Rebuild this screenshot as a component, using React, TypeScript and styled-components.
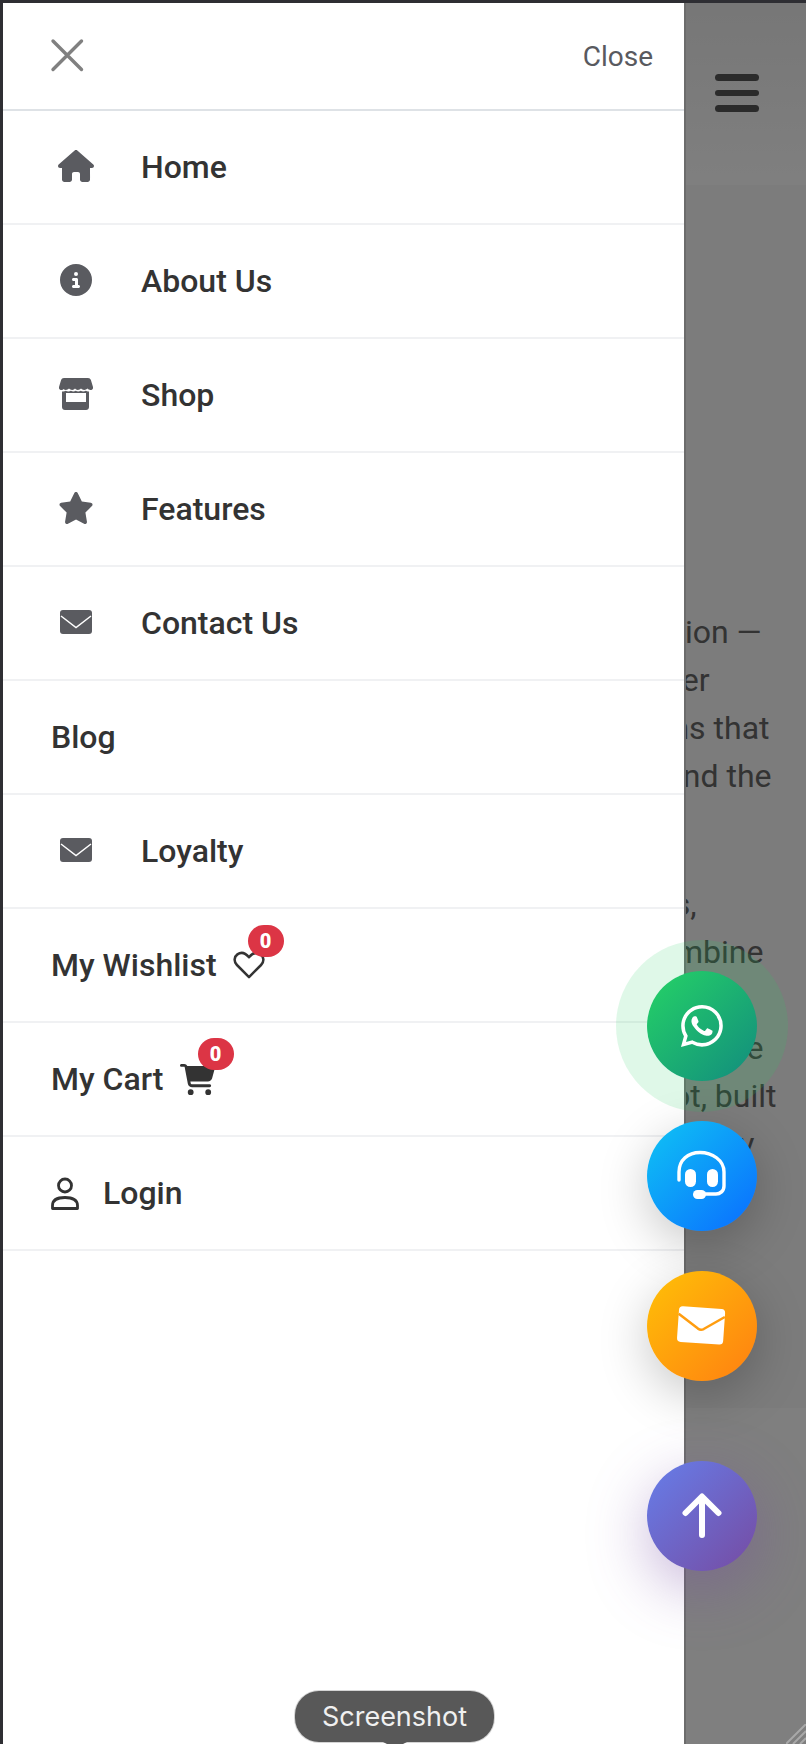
import styled, { createGlobalStyle } from 'styled-components';
import { FaHouse, FaCircleInfo, FaStar, FaCartShopping } from 'react-icons/fa6';
import { BsWhatsapp } from 'react-icons/bs';

const GlobalStyle = createGlobalStyle`
  html, body {
    margin: 0;
    padding: 0;
    background: #fff;
  }
  body {
    font-family: Roboto, "Liberation Sans", sans-serif;
  }
`;

const Screen = styled.div`
  position: relative;
  width: 806px;
  height: 1744px;
  box-sizing: border-box;
  overflow: hidden;
  border-top: 3px solid #2e2e33;
  border-left: 3px solid #2e2e33;
`;

const Page = styled.div`
  display: flex;
  flex-direction: column;
  height: 100%;
  background: #fff;
`;

const PageHeader = styled.header`
  display: flex;
  justify-content: flex-end;
  box-sizing: border-box;
  height: 182px;
  padding: 71px 47px 0 0;
  background: linear-gradient(#eee, #fff);
  box-shadow: 0 3px 12px rgba(0, 0, 0, 0.06);
`;

const Burger = styled.div`
  display: flex;
  flex-direction: column;
  gap: 9px;
  width: 44px;
`;

const BurgerBar = styled.span`
  height: 6.5px;
  border-radius: 4px;
  background: #565656;
`;

const Article = styled.main`
  box-sizing: border-box;
  height: 1223px;
  padding-top: 423px;
  background: #f8f8f8;
  color: #666;
  font-size: 32px;
  line-height: 48px;
`;

const Paragraph = styled.div`
  margin-bottom: 80px;
`;

const TextLine = styled.div<{ $end: number }>`
  white-space: nowrap;
  text-align: right;
  padding-right: ${({ $end }) => 804.5 - $end}px;
`;

const Overlay = styled.div`
  position: absolute;
  inset: 0;
  background: rgba(0, 0, 0, 0.5);
`;

const Drawer = styled.aside`
  position: absolute;
  top: 0;
  left: 0;
  bottom: 0;
  width: 683px;
  box-sizing: border-box;
  background: #fff;
  border-right: 2px solid #6c6c6c;
`;

const DrawerHeader = styled.div`
  display: flex;
  align-items: center;
  justify-content: space-between;
  box-sizing: border-box;
  height: 108px;
  padding: 0 31px 0 47px;
  border-bottom: 2px solid #dee2e6;
`;

const CloseLabel = styled.span`
  font-size: 28px;
  color: #595a5f;
`;

const MenuList = styled.nav`
  display: flex;
  flex-direction: column;
`;

const MenuRow = styled.div`
  display: flex;
  align-items: center;
  box-sizing: border-box;
  height: 114px;
  padding: 0 0 0 48px;
  border-bottom: 2px solid #f0f1f3;
  color: #333;
  font-size: 32px;
  font-weight: 500;
`;

const IconSlot = styled.span`
  display: flex;
  align-items: center;
  justify-content: center;
  width: 50px;
  margin-right: 40px;
  margin-bottom: 2px;
  color: #5a5b60;
`;

const LoginIcon = styled.span`
  display: flex;
  margin-right: 24px;
  color: #333;
`;

const BadgeHolder = styled.span`
  position: relative;
  display: flex;
  margin-left: 16px;
  color: #333;
`;

const Badge = styled.span<{ $left: number; $top: number }>`
  position: absolute;
  left: ${({ $left }) => $left}px;
  top: ${({ $top }) => $top}px;
  display: flex;
  align-items: center;
  justify-content: center;
  width: 36px;
  height: 32px;
  border-radius: 16px;
  background: #dc3545;
  color: #fff;
  font-size: 20px;
  font-weight: 900;
`;

const FloatColumn = styled.div`
  position: absolute;
  top: 968px;
  right: 49px;
  display: flex;
  flex-direction: column;
  gap: 40px;
`;

const FloatButton = styled.div<{ $background: string; $shadow: string; $offset?: number }>`
  display: flex;
  align-items: center;
  justify-content: center;
  width: 110px;
  height: 110px;
  margin-top: ${({ $offset }) => $offset || 0}px;
  border-radius: 50%;
  color: #fff;
  background: ${({ $background }) => $background};
  box-shadow: ${({ $shadow }) => $shadow};
`;

const ScreenshotPill = styled.div`
  position: absolute;
  left: 292px;
  top: 1688px;
  display: flex;
  align-items: center;
  justify-content: center;
  width: 199px;
  height: 51px;
  border-radius: 24px;
  background: #585858;
  box-shadow: 0 0 0 1px rgba(160, 160, 160, 0.45);
  color: #f0f0f0;
  font-family: Inter, "Liberation Sans", sans-serif;
  font-size: 27px;

  &::after {
    content: '';
    position: absolute;
    left: 86px;
    bottom: -6px;
    border-left: 14px solid transparent;
    border-right: 14px solid transparent;
    border-top: 7px solid #585858;
  }
`;

const ResizeGrip = styled.svg`
  position: absolute;
  right: 0;
  bottom: 0;
`;

const MailGlyph = () => (
  <svg width="32" height="24" viewBox="0 0 32 24">
    <rect width="32" height="24" rx="3" fill="currentColor" />
    <path d="M1 6 L16 17.5 L31 6" fill="none" stroke="#fff" strokeWidth="1.5" />
  </svg>
);

const ShopGlyph = () => (
  <svg width="34" height="32" viewBox="0 0 34 32">
    <path
      fill="currentColor"
      d="M5 0h24c1.500 0 2.400.8 2.900 2L34 9c.3 1.600-.6 3-2.500 3-1.300 0-2.400-.5-3.100-1.400-.8.9-1.900 1.400-3.200 1.400s-2.400-.5-3.200-1.400c-.8.9-1.900 1.400-3.200 1.400-1.200 0-2.200-.5-2.800-1.400-.6.9-1.600 1.400-2.800 1.400-1.300 0-2.400-.5-3.200-1.400-.8.9-1.900 1.400-3.200 1.400s-2.400-.5-3.100-1.400C4.900 11.500 3.800 12 2.500 12 .6 12-.3 10.600 0 9l2.100-7C2.600.8 3.500 0 5 0z"
    />
    <path
      fill="currentColor"
      fillRule="evenodd"
      d="M3 13.500c1.300.3 2.700 0 3.800-.7 1.500 1 3.600 1 5.100 0 1.500 1 3.300 1 4.800 0 1.500 1 3.500 1 5 0 1.500 1 3.600 1 5.100 0 1.100.7 2.100 1 3.200.7V29c0 1.700-1.300 3-3 3H6c-1.700 0-3-1.300-3-3V13.500zM7 15v9h20v-9H7z"
    />
  </svg>
);

const CloseGlyph = () => (
  <svg width="36" height="36" viewBox="0 0 36 36">
    <path d="M3 3 L31.500 31.500 M31.500 3 L3 31.500" stroke="#808080" strokeWidth="3.400" strokeLinecap="round" />
  </svg>
);

const HeartGlyph = () => (
  <svg width="32" height="28" viewBox="0 0 33 29">
    <path
      d="M16.500 27 L4 14.500 C0.500 11 1 6 4.500 3.500 C8 1 12.500 1.700 16.500 6.500 C20.500 1.700 25 1 28.500 3.500 C32 6 32.500 11 29 14.500 Z"
      fill="none"
      stroke="currentColor"
      strokeWidth="2.600"
      strokeLinejoin="round"
    />
  </svg>
);

const UserGlyph = () => (
  <svg width="28" height="33" viewBox="0 0 28 33">
    <circle cx="14" cy="8.500" r="6.500" fill="none" stroke="currentColor" strokeWidth="2.800" />
    <path
      d="M1.500 31.500 V28.500 C1.500 23 6 20.500 14 20.500 C22 20.500 26.500 23 26.500 28.500 V31.500 Z"
      fill="none"
      stroke="currentColor"
      strokeWidth="2.800"
      strokeLinejoin="round"
    />
  </svg>
);

const HeadsetGlyph = () => (
  <svg width="54" height="54" viewBox="0 0 54 54">
    <path
      d="M4 31 V23 C4 11 13 3.500 25 3.500 C37 3.500 49 11 49 23 V37 C49 42 45 45 41 45 H30"
      fill="none"
      stroke="#fff"
      strokeWidth="3.400"
      strokeLinecap="round"
    />
    <rect x="10" y="20" width="11" height="18" rx="5.500" fill="#fff" />
    <rect x="32" y="20" width="11" height="18" rx="5.500" fill="#fff" />
    <rect x="18" y="41" width="13" height="9" rx="4.500" fill="#fff" />
  </svg>
);

const EnvelopeGlyph = () => (
  <svg width="52" height="46" viewBox="0 0 54 46">
    <g transform="rotate(4 27 23)">
      <rect x="2" y="4" width="48" height="37" rx="4" fill="#fff" />
      <path d="M2 12 L23 26 C25 27.200 27 27.200 29 26 L50 12" fill="none" stroke="#ff9d10" strokeWidth="2.600" />
    </g>
  </svg>
);

const ArrowGlyph = () => (
  <svg width="40" height="46" viewBox="0 0 40 46">
    <path
      d="M20 42 V4 M3.500 20 L20 3.500 L36.500 20"
      fill="none"
      stroke="#fff"
      strokeWidth="6"
      strokeLinecap="round"
      strokeLinejoin="round"
    />
  </svg>
);

const paragraphs = [
  [
    { text: 'Discover our latest collection —', end: 760 },
    { text: 'handpicked for every customer', end: 708 },
    { text: 'with thoughtful designs that', end: 768 },
    { text: 'bring together style and the', end: 770 },
  ],
  [
    { text: 'Our team of experts,', end: 695 },
    { text: 'work hard to combine', end: 762 },
    { text: 'value, quality and care,', end: 748 },
    { text: 'in every single piece', end: 762 },
    { text: 'that we got, built', end: 775 },
    { text: 'to last you every', end: 753 },
  ],
];

const iconItems = [
  { label: 'Home', icon: <FaHouse size={36} /> },
  { label: 'About Us', icon: <FaCircleInfo size={32} /> },
  { label: 'Shop', icon: <ShopGlyph /> },
  { label: 'Features', icon: <FaStar size={36} /> },
  { label: 'Contact Us', icon: <MailGlyph /> },
];

const App = () => {
  return (
    <>
      <GlobalStyle />
      <Screen>
        <Page>
          <PageHeader>
            <Burger>
              <BurgerBar />
              <BurgerBar />
              <BurgerBar />
            </Burger>
          </PageHeader>
          <Article>
            {paragraphs.map((lines, i) => (
              <Paragraph key={i}>
                {lines.map((line) => (
                  <TextLine key={line.text} $end={line.end}>{line.text}</TextLine>
                ))}
              </Paragraph>
            ))}
          </Article>
        </Page>
        <Overlay />
        <Drawer>
          <DrawerHeader>
            <CloseGlyph />
            <CloseLabel>Close</CloseLabel>
          </DrawerHeader>
          <MenuList>
            {iconItems.map((item) => (
              <MenuRow key={item.label}>
                <IconSlot>{item.icon}</IconSlot>
                {item.label}
              </MenuRow>
            ))}
            <MenuRow>Blog</MenuRow>
            <MenuRow>
              <IconSlot><MailGlyph /></IconSlot>
              Loyalty
            </MenuRow>
            <MenuRow>
              My Wishlist
              <BadgeHolder>
                <HeartGlyph />
                <Badge $left={15} $top={-26}>0</Badge>
              </BadgeHolder>
            </MenuRow>
            <MenuRow>
              My Cart
              <BadgeHolder>
                <FaCartShopping size={35} />
                <Badge $left={18} $top={-24}>0</Badge>
              </BadgeHolder>
            </MenuRow>
            <MenuRow>
              <LoginIcon><UserGlyph /></LoginIcon>
              Login
            </MenuRow>
          </MenuList>
        </Drawer>
        <FloatColumn>
          <FloatButton
            $background="linear-gradient(135deg, #25d366, #128c7e)"
            $shadow="0 0 0 31px rgba(37, 211, 102, 0.15)"
          >
            <BsWhatsapp size={42} />
          </FloatButton>
          <FloatButton
            $background="linear-gradient(135deg, #0fc4f4, #0a6cff)"
            $shadow="0 14px 50px rgba(0, 0, 0, 0.22)"
          >
            <HeadsetGlyph />
          </FloatButton>
          <FloatButton
            $background="linear-gradient(135deg, #ffc107, #ff7f11)"
            $shadow="0 14px 50px rgba(0, 0, 0, 0.22)"
          >
            <EnvelopeGlyph />
          </FloatButton>
          <FloatButton
            $offset={40}
            $background="linear-gradient(135deg, #667eea, #764ba2)"
            $shadow="0 18px 60px rgba(118, 75, 162, 0.4)"
          >
            <ArrowGlyph />
          </FloatButton>
        </FloatColumn>
        <ScreenshotPill>Screenshot</ScreenshotPill>
        <ResizeGrip width="20" height="20" viewBox="0 0 20 20">
          <path d="M0 20 L20 0 M7 20 L20 7 M14 20 L20 14" stroke="#a8a8a8" strokeWidth="2" />
        </ResizeGrip>
      </Screen>
    </>
  );
};

export default App;
